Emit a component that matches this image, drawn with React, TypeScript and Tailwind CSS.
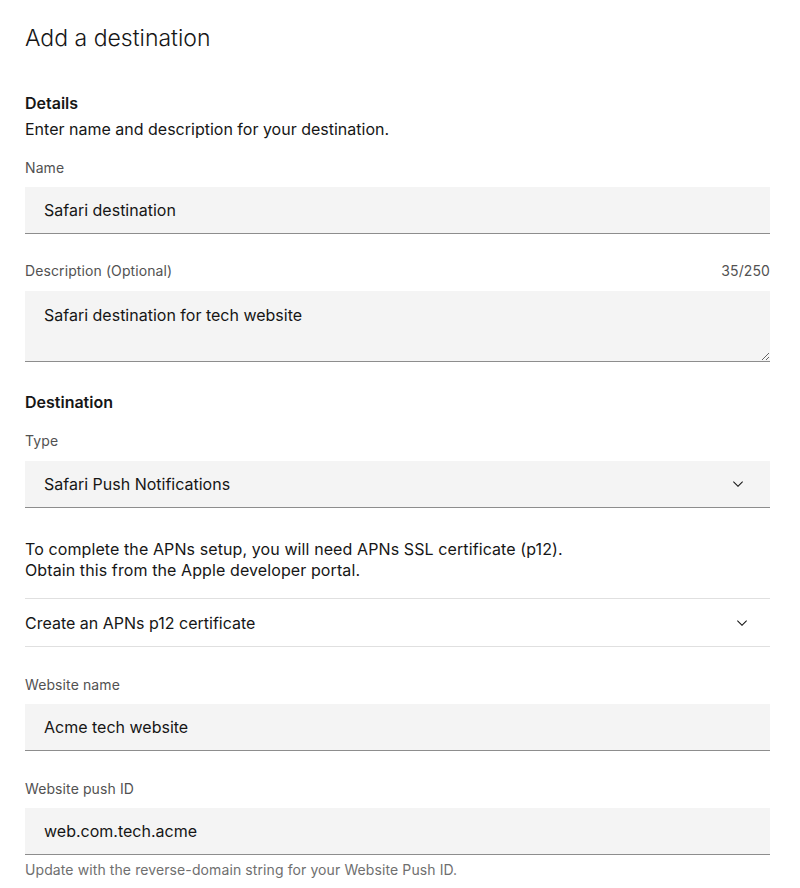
const LABEL = 'block text-[14px] leading-[18px] tracking-[0.1px] text-[#525252]'
const FIELD =
  'block h-[47px] w-full border-0 border-b border-[#8d8d8d] bg-[#f4f4f4] pl-[19px] pr-4 text-[16px] text-[#161616] outline-none'

function Chevron({ className = '' }: { className?: string }) {
  return (
    <svg viewBox="0 0 16 16" className={`size-4 fill-[#161616] ${className}`} aria-hidden="true">
      <path d="M8 11 3 6l.7-.7L8 9.6l4.3-4.3.7.7z" />
    </svg>
  )
}

function TextField({ label, value, helper, className = '' }: { label: string; value: string; helper?: string; className?: string }) {
  return (
    <div className={className}>
      <label className={LABEL}>{label}</label>
      <input readOnly value={value} className={`mt-[10px] ${FIELD}`} />
      {helper && <p className="mt-[6px] text-[14px] leading-[18px] tracking-[0.1px] text-[#6f6f6f]">{helper}</p>}
    </div>
  )
}

export default function App() {
  return (
    <div className="min-h-screen bg-white px-[25px] pt-[23px] pr-[30px] font-['Inter',sans-serif] text-[#161616]">
      <h1 className="text-[23px] leading-[31px] font-light">Add a destination</h1>

      <section className="mt-[37px]">
        <h2 className="text-[16px] leading-[24px] font-semibold">Details</h2>
        <p className="mt-[2px] text-[16px] leading-[24px]">Enter name and description for your destination.</p>

        <TextField label="Name" value="Safari destination" className="mt-[18px]" />

        <div className="mt-[28px]">
          <div className="flex items-center justify-between">
            <label className={LABEL}>Description (Optional)</label>
            <span className="text-[14px] leading-[18px] tracking-[0.1px] text-[#525252]">35/250</span>
          </div>
          <textarea
            readOnly
            defaultValue="Safari destination for tech website"
            className="mt-[11px] block h-[71px] w-full resize-y border-0 border-b border-[#8d8d8d] bg-[#f4f4f4] pt-[12px] pl-[19px] pr-4 text-[16px] leading-[24px] text-[#161616] outline-none"
          />
        </div>
      </section>

      <section className="mt-[28px]">
        <h2 className="text-[16px] leading-[24px] font-semibold">Destination</h2>

        <div className="mt-[18px]">
          <label className={LABEL}>Type</label>
          <div className="mt-[11px] flex h-[47px] items-center justify-between border-b border-[#8d8d8d] bg-[#f4f4f4] pl-[19px] pr-[24px]">
            <span className="text-[16px]">Safari Push Notifications</span>
            <Chevron />
          </div>
        </div>

        <p className="mt-[31px] text-[16px] leading-[21px] tracking-[0.1px]">
          To complete the APNs setup, you will need APNs SSL certificate (p12).
          <br />
          Obtain this from the Apple developer portal.
        </p>

        <div className="mt-[17px] flex h-[49px] items-center justify-between border-y border-[#e0e0e0] pr-[20px]">
          <span className="text-[16px]">Create an APNs p12 certificate</span>
          <Chevron />
        </div>

        <TextField label="Website name" value="Acme tech website" className="mt-[29px]" />
        <TextField
          label="Website push ID"
          value="web.com.tech.acme"
          helper="Update with the reverse-domain string for your Website Push ID."
          className="mt-[29px]"
        />
      </section>
    </div>
  )
}
